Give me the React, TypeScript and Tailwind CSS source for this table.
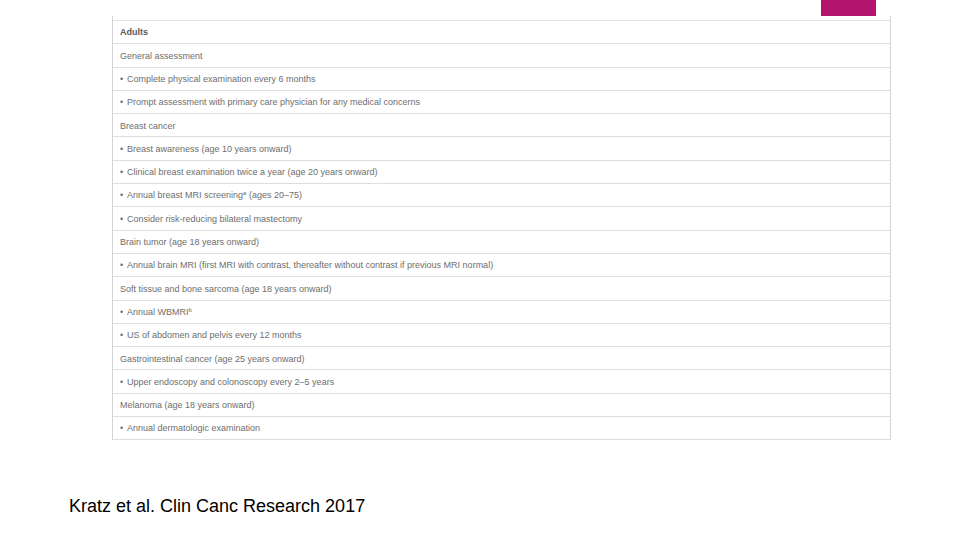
const rows: { text: string; sup?: string; rest?: string; bullet?: boolean; bold?: boolean }[] = [
  { text: 'Adults', bold: true },
  { text: 'General assessment' },
  { text: 'Complete physical examination every 6 months', bullet: true },
  { text: 'Prompt assessment with primary care physician for any medical concerns', bullet: true },
  { text: 'Breast cancer' },
  { text: 'Breast awareness (age 10 years onward)', bullet: true },
  { text: 'Clinical breast examination twice a year (age 20 years onward)', bullet: true },
  { text: 'Annual breast MRI screening', sup: 'a', rest: ' (ages 20\u201375)', bullet: true },
  { text: 'Consider risk-reducing bilateral mastectomy', bullet: true },
  { text: 'Brain tumor (age 18 years onward)' },
  { text: 'Annual brain MRI (first MRI with contrast, thereafter without contrast if previous MRI normal)', bullet: true },
  { text: 'Soft tissue and bone sarcoma (age 18 years onward)' },
  { text: 'Annual WBMRI', sup: 'b', bullet: true },
  { text: 'US of abdomen and pelvis every 12 months', bullet: true },
  { text: 'Gastrointestinal cancer (age 25 years onward)' },
  { text: 'Upper endoscopy and colonoscopy every 2\u20135 years', bullet: true },
  { text: 'Melanoma (age 18 years onward)' },
  { text: 'Annual dermatologic examination', bullet: true },
];

export default function App() {
  return (
    <div className="relative w-[960px] h-[540px] bg-white overflow-hidden font-['Liberation_Sans',Arial,sans-serif]">
      {/* accent tab */}
      <div className="absolute left-[821px] top-0 w-[55px] h-[16px] bg-[#b3146e]" />

      <div className="pt-[16px] pl-[112px]">
        <div className="w-[779px] border-l border-r border-[#d4d4d4]">
          <div className="h-[5px] border-b border-[#e2e2e2]" />
          {rows.map((r) => (
            <div
              key={r.text}
              className="h-[23.3px] flex items-center pt-[2px] border-b border-[#dedede] pl-[7px] text-[9px] text-[#6e6e6e] whitespace-nowrap"
            >
              {r.bullet && <span className="w-[7px]">•</span>}
              <span className={r.bold ? 'font-bold text-[#5a5a5a]' : ''}>
                {r.text}
                {r.sup && <sup className="text-[6px]">{r.sup}</sup>}
                {r.rest}
              </span>
            </div>
          ))}
        </div>
      </div>

      <div className="pl-[69px] pt-[57px] text-[18px] text-black leading-none">
        Kratz et al. Clin Canc Research 2017
      </div>
    </div>
  );
}
